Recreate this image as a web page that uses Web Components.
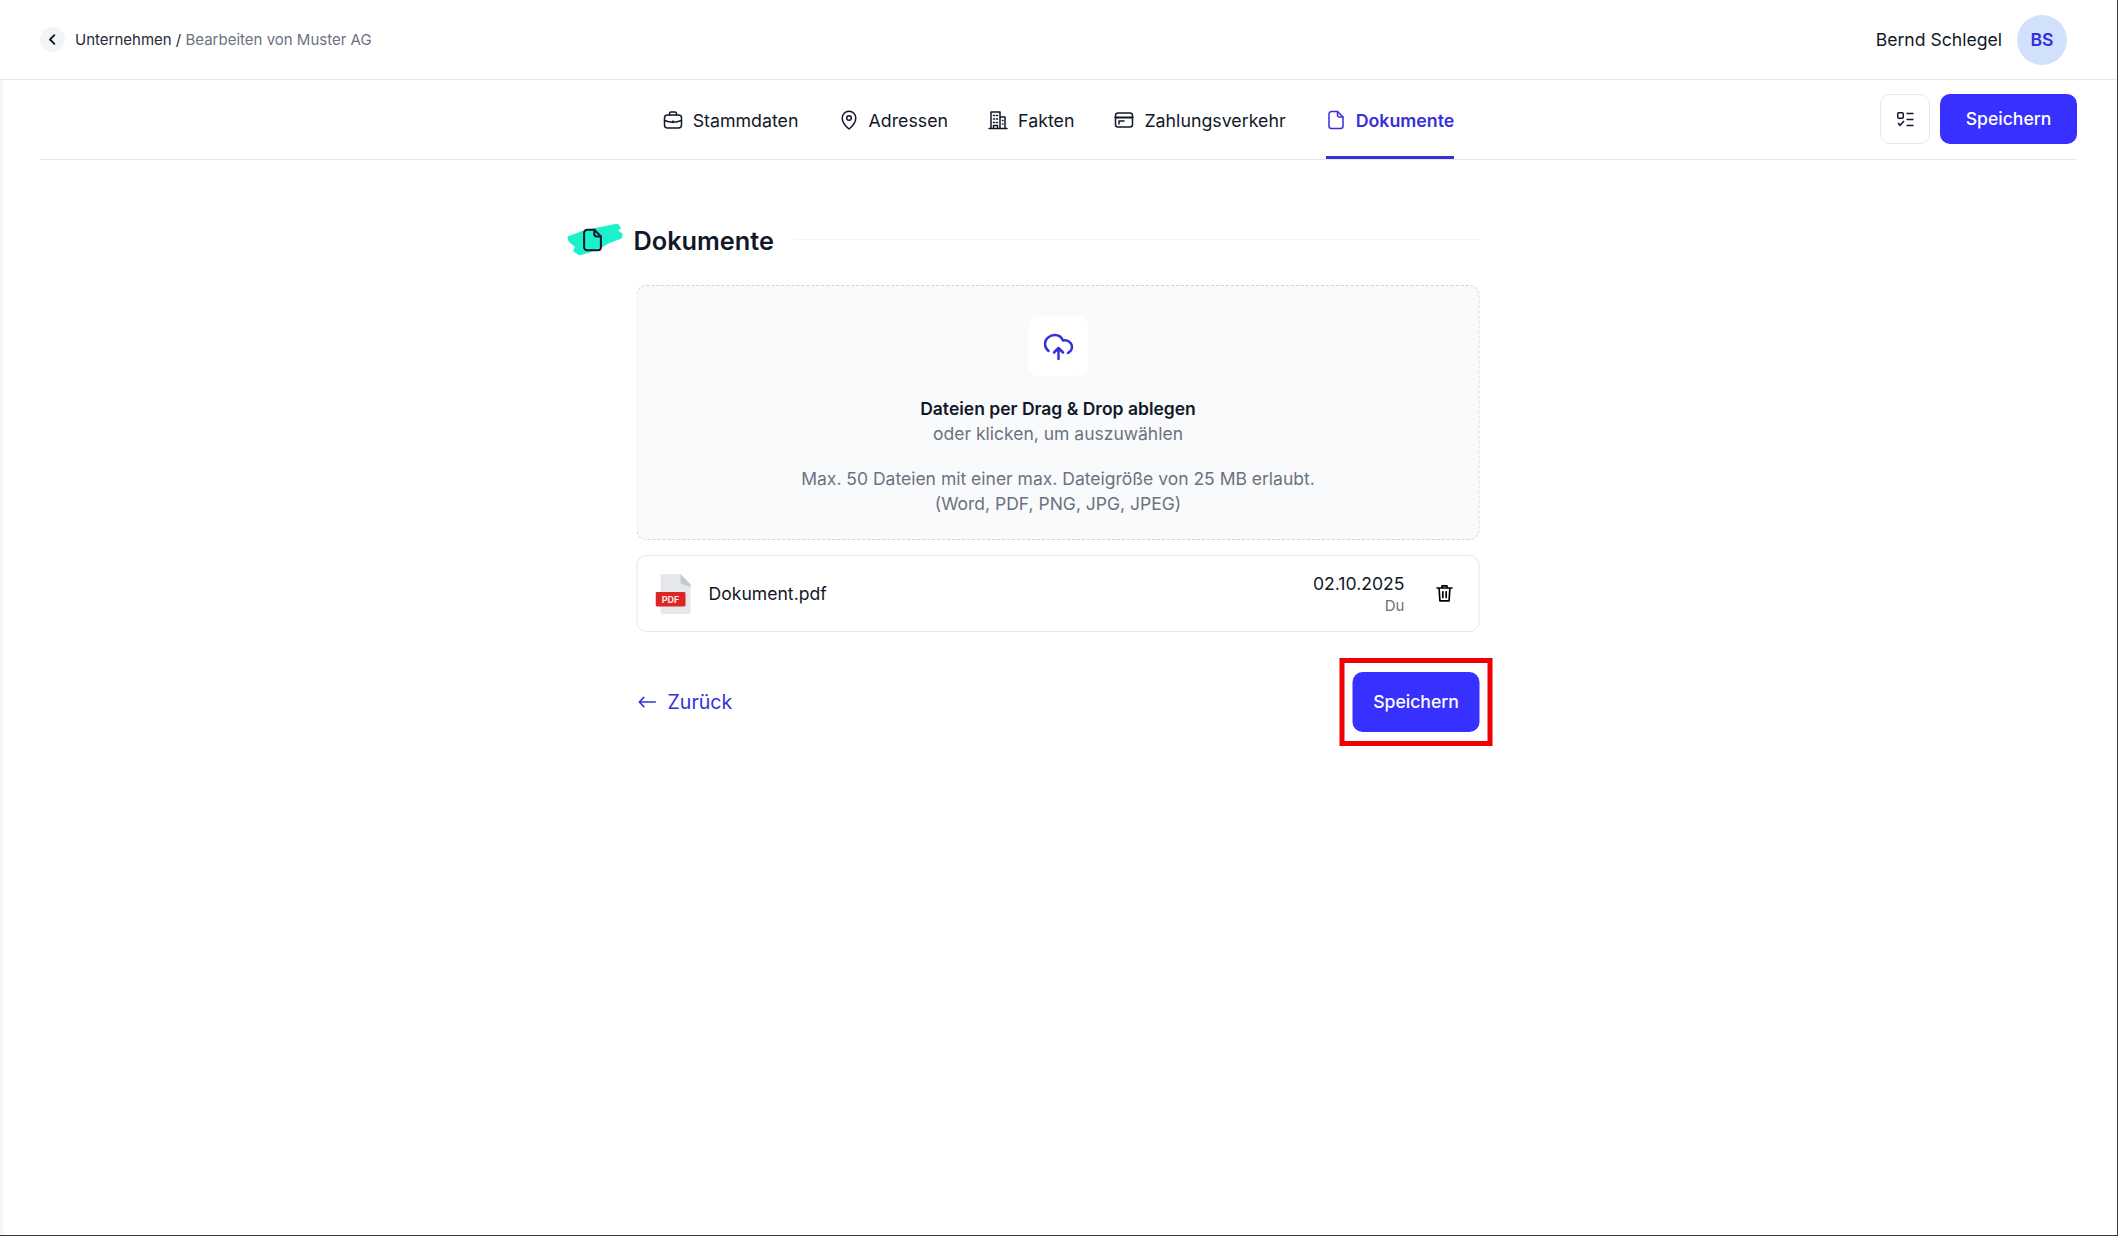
<!DOCTYPE html>
<html lang="de"><head><meta charset="utf-8"><title>Dokumente</title>
<style>
html,body{margin:0;height:100%;background:#fff}
body{font-family:Inter,"Liberation Sans",sans-serif;color:#111827;}
</style></head><body>
<app-shell>
  <app-header></app-header>
  <tab-bar></tab-bar>
  <doc-page></doc-page>
</app-shell>
<script>
const I={
 case:'<path d="M6.500 5V3.500A1.500 1.500 0 0 1 8 2h4a1.500 1.500 0 0 1 1.500 1.500V5"/><rect x="1.500" y="5" width="17" height="13" rx="3"/><path d="M1.500 10.500c5 2 12 2 17 0M10 11v1.500"/>',
 pin:'<path d="M10 19s-6.800-5.500-6.800-11a6.800 6.800 0 0 1 13.600 0c0 5.500-6.800 11-6.800 11z"/><circle cx="10" cy="8" r="2.300"/>',
 bld:'<path d="M1 18.500h18M3 18.500V2h9v16.500M12 7h5v11.500M5.500 5.500h1M8.500 5.500h1M5.500 9h1M8.500 9h1M5.500 12.500h1M8.500 12.500h1M5.500 18v-2.500h4V18M14.500 10.500h.500M14.500 14h.500"/>',
 card:'<rect x="1.500" y="3" width="17" height="14" rx="2.500"/><path d="M1.500 7.500h17" stroke-width="2.200"/><path d="M5 11h5M5 11v3"/>',
 doc:'<path d="M5.500 1.500h6l5.500 5.500v9a2.500 2.500 0 0 1-2.500 2.500h-9A2.500 2.500 0 0 1 3 16V4a2.500 2.500 0 0 1 2.500-2.500z"/><path d="M11.500 1.500V5a2 2 0 0 0 2 2H17"/>'
};
const svg=(p,s,w=2,c='currentColor',vb=24)=>`<svg width="${s}" height="${s}" viewBox="0 0 ${vb} ${vb}" fill="none" stroke="${c}" stroke-width="${w}" stroke-linecap="round" stroke-linejoin="round">${p}</svg>`;
function def(name,css,html){customElements.define(name,class extends HTMLElement{constructor(){super();this.attachShadow({mode:'open'}).innerHTML=`<style>${css}</style>`+(typeof html==='function'?html(this):html)}})}

def('app-shell',`:host{display:flex;flex-direction:column;min-height:1236px;box-sizing:border-box;border-right:1px solid #3a3a3a;border-bottom:1px solid #3a3a3a;background:linear-gradient(90deg,#f0f0f0 0,#fafafa 2px,#fff 6px)}`,`<slot></slot>`);

def('app-button',`:host{display:inline-flex}
button{font:500 17.600px/1 Inter,sans-serif;color:#fff;background:#3730ff;border:0;border-radius:10px;padding:0;display:flex;align-items:center;justify-content:center;width:var(--w);height:var(--h)}`,`<button><slot></slot></button>`);

def('app-header',`:host{display:flex;align-items:center;height:80px;box-sizing:border-box;padding:0 50px 0 40px;border-bottom:1px solid #e5e7eb;background:#fff;flex:none}
.back{width:25px;height:25px;border-radius:50%;background:#f3f4f6;display:flex;align-items:center;justify-content:center;margin-right:10px}
.crumb{font-size:15px;color:#1f2937}.crumb i{font-style:normal;color:#6b7280}
.sp{flex:1}.name{font-size:17.600px;color:#111827;margin-right:15px}
.av{width:50px;height:50px;border-radius:50%;background:#d2e1fb;color:#3730d8;font-weight:600;font-size:17.600px;display:flex;align-items:center;justify-content:center}`,
`<div class="back">${svg('<path d="M15 5l-7 7 7 7"/>',15,3,'#111827')}</div><div class="crumb">Unternehmen / <i>Bearbeiten von Muster AG</i></div><div class="sp"></div><div class="name">Bernd Schlegel</div><div class="av">BS</div>`);

def('tab-item',`:host{display:flex;align-items:center;gap:10px;height:79px;box-sizing:border-box;font-size:17.800px;color:#111827;border-bottom:3px solid transparent;padding-top:4px}
:host([active]){color:#3730d8;font-weight:600;border-bottom-color:#3730d8}
svg{display:block}`,
h=>svg(I[h.getAttribute('icon')],20,1.500,'currentColor',20)+`<slot></slot>`);

def('tab-bar',`:host{display:flex;position:relative;justify-content:center;height:80px;margin:0 40px;border-bottom:1px solid #e5e7eb;box-sizing:border-box;flex:none}
.tabs{display:flex;gap:40px}
.acts{position:absolute;right:0;top:14px;display:flex;gap:10px}
.chk{width:50px;height:50px;box-sizing:border-box;border:1px solid #e5e7eb;border-radius:10px;display:flex;align-items:center;justify-content:center;background:#fff}`,
`<div class="tabs"><tab-item icon="case">Stammdaten</tab-item><tab-item icon="pin">Adressen</tab-item><tab-item icon="bld">Fakten</tab-item><tab-item icon="card">Zahlungsverkehr</tab-item><tab-item icon="doc" active>Dokumente</tab-item></div>
<div class="acts"><div class="chk"><svg width="17" height="15" viewBox="0 0 17 15" fill="none" stroke="#111827" stroke-width="1.500"><rect x=".75" y=".75" width="5.500" height="5.500" rx="1"/><path d="M9.500 1.500h7M9.500 7.500h7M9.500 13.500h7M1 11l2 2.300 4-4.300"/></svg></div><app-button style="--w:137px;--h:50px">Speichern</app-button></div>`);

def('section-head',`:host{display:flex;align-items:center;height:60px;margin-left:-69px;width:912px}
.ic{position:relative;width:55px;height:32px;margin-right:11px;flex:none;top:1px}
.ic svg{position:absolute}
.ic .b{filter:blur(.6px)}
.ic .d{left:13px;top:4px}
h2{margin:3px 0 0;font-size:25.300px;font-weight:600;color:#111827;line-height:1;white-space:nowrap}
.ln{flex:1;height:1px;background:#f3f4f6;margin-left:20px}`,
`<div class="ic"><svg class="b" width="55" height="32" viewBox="0 0 55 32" style="left:0;top:0"><path d="M0 13L16 7L50 0L53 4L50 7L55 10L54 14L41 19L36 22L22 28L12 31L6 27L8 23L2 18z" fill="#1bf2cb" stroke="#1bf2cb" stroke-linejoin="round"/></svg><svg class="d" width="24" height="24" viewBox="0 0 20 20" fill="none" stroke="#111827" stroke-width="1.700" stroke-linejoin="round" stroke-linecap="round">${I.doc}</svg></div><h2><slot></slot></h2><div class="ln"></div>`);

def('drop-zone',`:host{display:flex;flex-direction:column;align-items:center;box-sizing:border-box;height:255px;border:1px dashed #d1d5db;border-radius:10px;background:#f9fafb;text-align:center;font-size:17.500px;color:#6b7280;padding-top:30px}
.i{width:60px;height:60px;background:#fff;border-radius:10px;display:flex;align-items:center;justify-content:center}
b{font-weight:600;color:#111827;margin-top:20px;line-height:25px;display:block}
p{margin:0;line-height:25px}.g{margin-top:20px}`,
`<div class="i"><svg width="30" height="30" viewBox="0 0 30 30" fill="none" stroke="#3730d8" stroke-width="2.500" stroke-linecap="round" stroke-linejoin="round"><path d="M5 20C2.500 18 1.500 15.500 1.500 13C1.500 8 6 4 11.500 4C15 4 18 6 19.500 9.500C24.500 8.500 28.500 12 28.500 16C28.500 18.500 27 20.500 24.500 22M15 28V17.500M10.500 21.500L15 17L19.500 21.500"/></svg></div><b>Dateien per Drag &amp; Drop ablegen</b><p>oder klicken, um auszuwählen</p><p class="g">Max. 50 Dateien mit einer max. Dateigröße von 25 MB erlaubt.</p><p>(Word, PDF, PNG, JPG, JPEG)</p>`);

def('file-row',`:host{display:flex;align-items:center;box-sizing:border-box;height:77px;margin-top:15px;border:1px solid #e5e7eb;border-radius:10px;padding:0 21px 0 18px;font-size:17.600px;background:#fff}
.n{margin-left:17px;flex:1}.d{text-align:right;line-height:24px}.d small{display:block;font-size:15px;color:#6b7280;line-height:20px}.t{margin-left:26px;display:flex;width:27px;justify-content:center;margin-top:-2px}`,
`<svg width="36" height="40" viewBox="0 0 36 42" preserveAspectRatio="none" style="flex:none"><path d="M5 0h20l10 11v28a3 3 0 0 1-3 3H8a3 3 0 0 1-3-3z" fill="#e5e7eb"/><path d="M25 0l10 11v3l-8-3a3 3 0 0 1-2-3z" fill="#c4c9d2"/><rect x="0" y="19" width="30" height="15" rx="1.500" fill="#dc2626"/><text x="15" y="30" text-anchor="middle" font-family="Inter,sans-serif" font-size="9" font-weight="700" fill="#fde8e8">PDF</text></svg>
<div class="n">Dokument.pdf</div><div class="d">02.10.2025<small>Du</small></div><div class="t">${svg('<path d="M3 6h18M9 6V3.500h6V6M5.500 6l1 15.500h11l1-15.500M10 10.500v7M14 10.500v7"/>',20,2,'#000')}</div>`);

def('doc-page',`:host{display:block;width:843px;margin:0 auto;padding-top:49px;transform:translateX(-.5px)}
.foot{display:flex;justify-content:space-between;align-items:center;margin-top:40px}
.back{display:flex;align-items:center;gap:9px;color:#3730d8;font-size:19.600px}
.mark{position:relative;display:flex}
.mark::after{content:"";position:absolute;inset:-14px -13px;border:5px solid #f00000;pointer-events:none}
.hd{margin-bottom:16px}`,
`<section-head class="hd">Dokumente</section-head><drop-zone></drop-zone><file-row></file-row>
<div class="foot"><div class="back">${svg('<path d="M20.500 12H3M8 7l-5 5 5 5"/>',22,1.700)}Zurück</div><div class="mark"><app-button style="--w:127px;--h:60px">Speichern</app-button></div></div>`);
</script></body></html>
